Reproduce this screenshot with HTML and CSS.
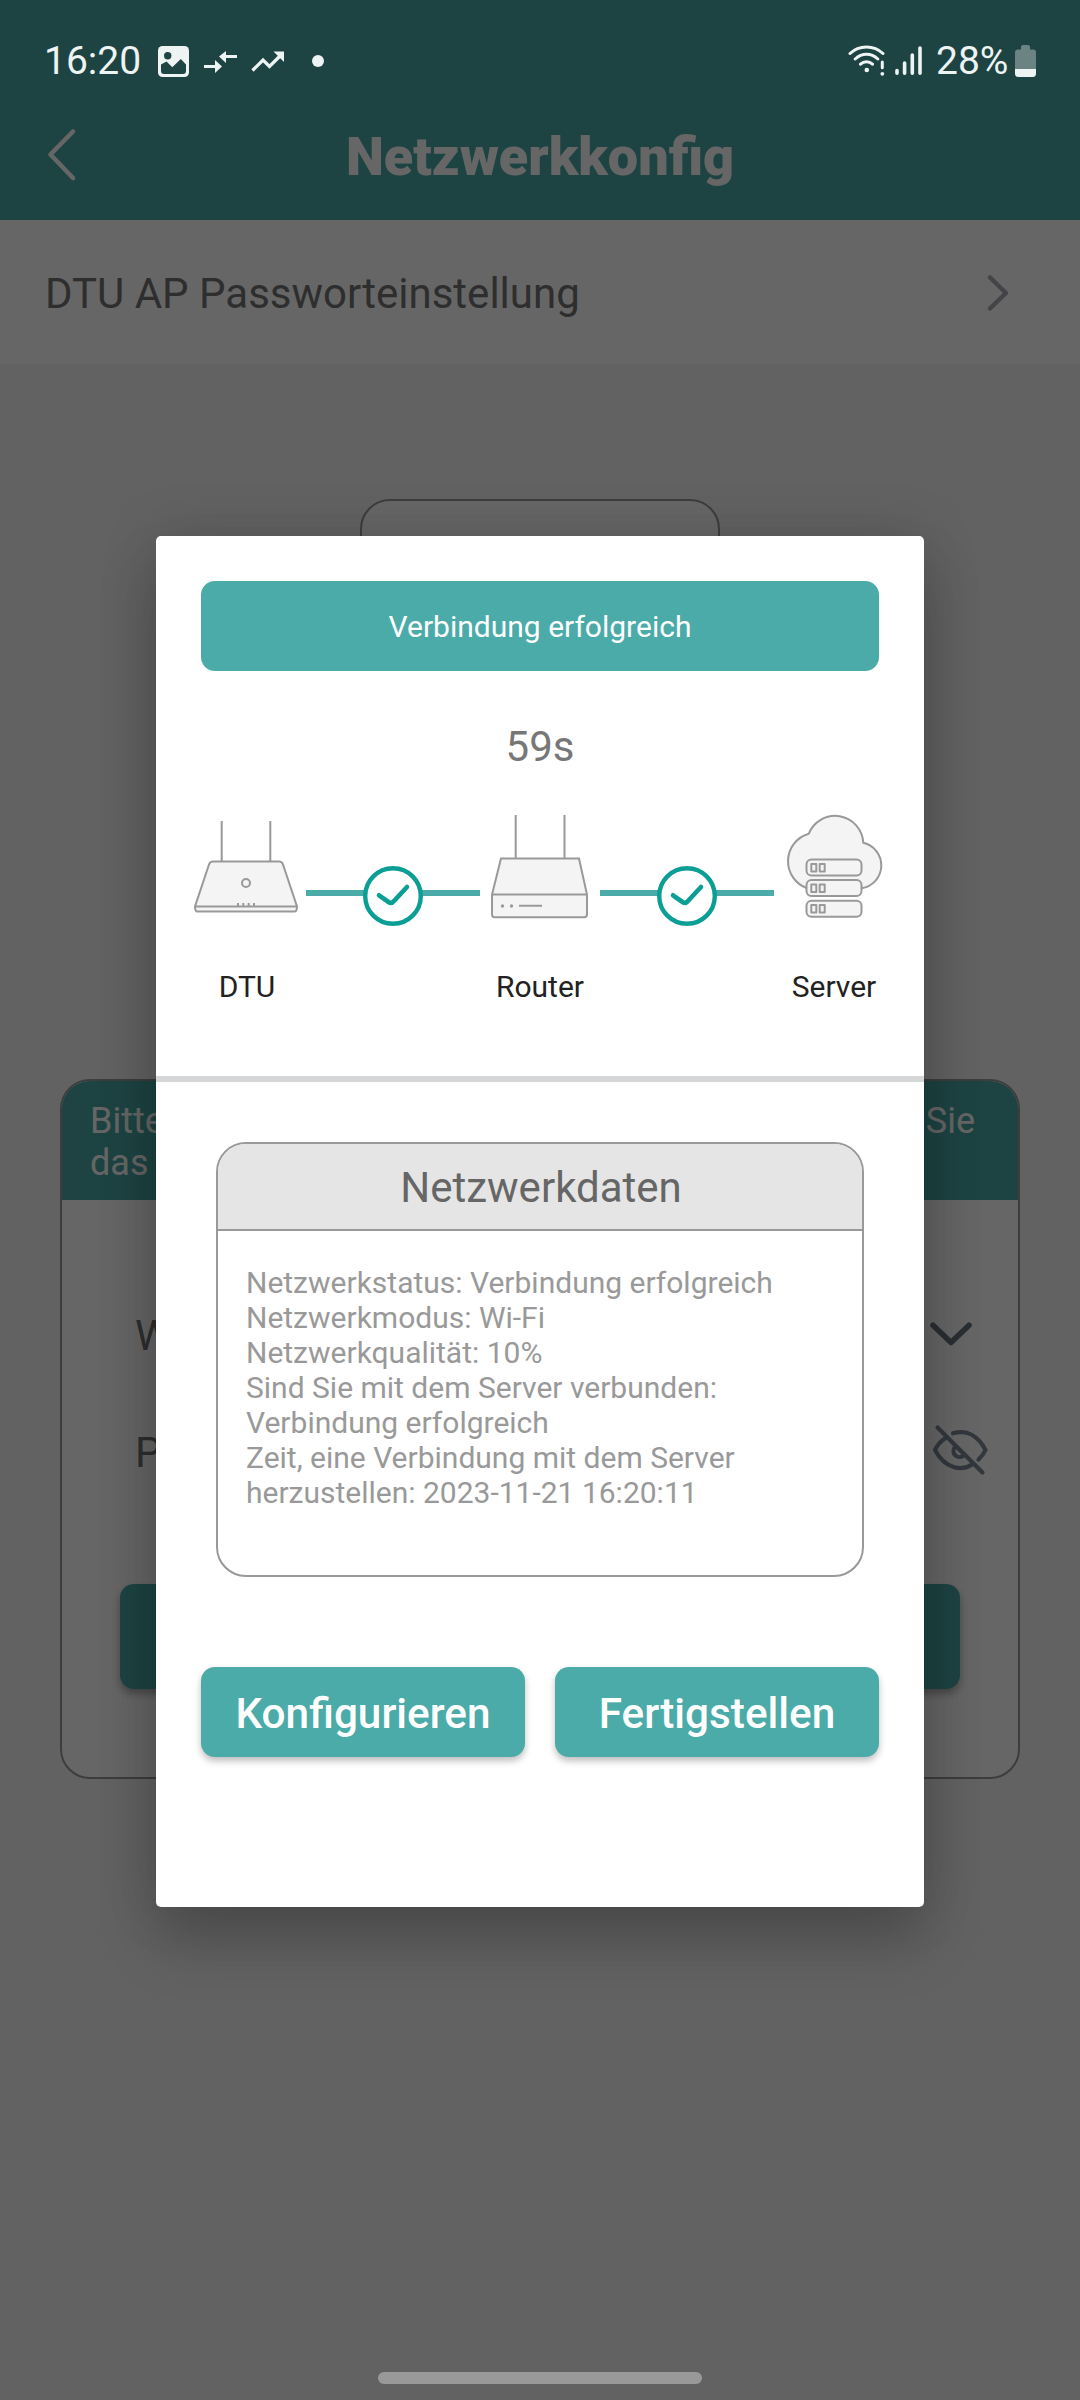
FILE: index.html
```html
<!DOCTYPE html>
<html lang="de">
<head>
<meta charset="utf-8">
<title>Netzwerkkonfig</title>
<link rel="stylesheet" href="styles.css">
</head>
<body>
<div class="screen">
  <header class="app-header">
    <svg class="back" width="40" height="60" viewBox="0 0 40 60"><path d="M33 6.500 10.500 29.500 33 53" fill="none" stroke="#fff" stroke-width="4.500" stroke-linecap="round" stroke-linejoin="round"/></svg>
    <h1 class="title">Netzwerkkonfig</h1>
  </header>
  <div class="setting-row">
    <span>DTU AP Passworteinstellung</span>
    <svg width="24" height="40" viewBox="0 0 24 40"><path d="M4 4.500 20 20 4 35.500" fill="none" stroke="#a8abb3" stroke-width="4.500" stroke-linecap="round" stroke-linejoin="round"/></svg>
  </div>
  <main class="content">
    <div class="device-box"></div>
    <section class="wifi-card">
      <div class="wifi-head"><div class="wifi-line"><span>Bitte</span><span>Sie</span></div><div class="wifi-line">das</div></div>
      <div class="wifi-row">
        <span>W</span>
        <svg class="chevron" width="46" height="28" viewBox="0 0 46 28"><path d="M5 3.200 23 20.500 41 3.200" fill="none" stroke="#6a7583" stroke-width="5.600" stroke-linecap="round" stroke-linejoin="round"/></svg>
      </div>
      <div class="wifi-row">
        <span>P</span>
        <svg class="eye" width="58" height="54" viewBox="0 0 58 54" fill="none" stroke="#7f8c9b" stroke-width="4.200" stroke-linecap="round" stroke-linejoin="round"><path d="M6.500 4.500 51.500 49.500M22 10.300C37 6 48 14.500 54.500 27Q52 32.500 47.500 36.500M14.500 15Q7.500 19.500 4 27C14 46 31 48.500 41 41.500M24 24a6 6 0 0 0 9 8M28 26.500 31 29"/></svg>
      </div>
      <div class="wifi-button"></div>
    </section>
  </main>
</div>
<div class="scrim">
  <div class="dialog">
    <div class="banner">Verbindung erfolgreich</div>
    <div class="timer">59s</div>
    <div class="chain">
      <div class="node">
        <svg width="120" height="120" viewBox="0 0 120 120" fill="#f4f4f4" stroke="#999" stroke-width="2">
          <path d="M35.700 15V55M84.300 15V55"/>
          <path d="M27 55.500H93Q96 55.500 97 58.500L111 100.500Q111 105.500 108.500 105.500H11.500Q9 105.500 9 100.500L23 58.500Q24 55.500 27 55.500ZM9.500 100.500H110.500"/>
          <circle cx="60" cy="77" r="4"/><path d="M52 97V101M57.300 97V101M62.700 97V101M68 97V101"/>
        </svg>
        <span class="dtu-label">DTU</span>
      </div>
      <div class="link"><svg width="60" height="60" viewBox="0 0 60 60"><circle cx="30" cy="30" r="27.800" fill="#fff" stroke="#0b9e95" stroke-width="4.400"/><path d="M16 29.300 25.500 36Q28.500 38 31 35L44 21" fill="none" stroke="#0b9e95" stroke-width="4.600" stroke-linecap="round"/></svg></div>
      <div class="node">
        <svg width="120" height="120" viewBox="0 0 120 120" fill="#f4f4f4" stroke="#999" stroke-width="2">
          <path d="M35.700 9V52M84.500 9V52"/>
          <path d="M21 52.500H99L107 88.500V108.500Q107 111.200 104.300 111.200H14.700Q12 111.200 12 108.500V88.500ZM12 88.500H107M39 99.700H62"/>
          <g fill="#999" stroke="none"><circle cx="22.500" cy="100" r="1.700"/><circle cx="31.500" cy="100" r="1.700"/></g>
        </svg>
        <span>Router</span>
      </div>
      <div class="link"><svg width="60" height="60" viewBox="0 0 60 60"><circle cx="30" cy="30" r="27.800" fill="#fff" stroke="#0b9e95" stroke-width="4.400"/><path d="M16 29.300 25.500 36Q28.500 38 31 35L44 21" fill="none" stroke="#0b9e95" stroke-width="4.600" stroke-linecap="round"/></svg></div>
      <div class="node">
        <svg width="120" height="120" viewBox="0 0 120 120" fill="#f4f4f4" stroke="#999" stroke-width="2">
          <path d="M33 82.200A28.600 28.600 0 0 1 34.700 27.800A28.300 28.300 0 0 1 89.300 36.800A23.100 23.100 0 0 1 87.500 82.200Z"/>
          <rect x="32.500" y="53.500" width="55" height="16" rx="5"/><rect x="32.500" y="74" width="55" height="16" rx="5"/><rect x="32.500" y="94.700" width="55" height="16" rx="5"/>
          <path d="M37.300 58h5v7.500h-5zM45.700 58h5v7.500h-5zM37.300 78.500h5v7.500h-5zM45.700 78.500h5v7.500h-5zM37.300 99h5v7.500h-5zM45.700 99h5v7.500h-5z" stroke-linejoin="round"/>
        </svg>
        <span>Server</span>
      </div>
    </div>
    <div class="divider"></div>
    <section class="data-card">
      <h2 class="data-title">Netzwerkdaten</h2>
      <div class="data-body">
        Netzwerkstatus: Verbindung erfolgreich<br>
        Netzwerkmodus: Wi-Fi<br>
        Netzwerkqualität: 10%<br>
        Sind Sie mit dem Server verbunden:<br>
        Verbindung erfolgreich<br>
        Zeit, eine Verbindung mit dem Server<br>
        herzustellen: 2023-11-21 16:20:11
      </div>
    </section>
    <div class="actions">
      <button class="action">Konfigurieren</button>
      <button class="action">Fertigstellen</button>
    </div>
  </div>
</div>
<div class="status-bar">
  <span class="clock">16:20</span>
  <svg class="i-photo" width="31" height="31" viewBox="0 0 31 31"><rect width="31" height="31" rx="4.500" fill="#eef3f3"/><circle cx="9.700" cy="9.700" r="3.700" fill="#1e4443"/><path d="M3 22.500V18.500L8.500 15.500 14.300 21.300 22.800 13 28 18.500V25Q28 28 25 28H6Q3 28 3 25Z" fill="#1e4443"/><path d="M0 18 2.500 20.500 8.500 15.500 14.300 21.300 22.800 13 28 18.500 31 21.500V18Z" fill="none"/></svg>
  <svg class="i-arrows" width="34" height="22" viewBox="0 0 34 22" fill="#eef3f3"><path d="M0 14H11V9L18 15.500 11 22V17H0ZM33 4H22V0L15 5.500 22 12V7H33Z"/></svg>
  <svg class="i-trend" width="34" height="22" viewBox="0 0 34 22"><path d="M1.500 19.500 12 9 18.500 15.500 29 5" fill="none" stroke="#eef3f3" stroke-width="3.300"/><path d="M22.500 0.500H33V11Z" fill="#eef3f3"/></svg>
  <span class="i-dot"></span>
  <svg class="i-wifi" width="38" height="34" viewBox="0 0 38 34" fill="none" stroke="#eef3f3" stroke-width="3" stroke-linecap="round"><path d="M2 10.500C11 1.700 26 1.700 35 10.500M7.200 16C14 9.800 23 9.800 29.800 16M12.500 21.200C16 17.800 21 17.800 24.500 21.200M34.300 19V24.800"/><g fill="#eef3f3" stroke="none"><circle cx="18.800" cy="27" r="2.300"/><circle cx="34.300" cy="30.800" r="1.900"/></g></svg>
  <svg class="i-signal" width="28" height="30" viewBox="0 0 28 30" stroke="#eef3f3" stroke-width="3.600" stroke-linecap="round"><path d="M2 24.500V27.200M9.600 17V27.200M17.300 9V27.200M25 2V27.200"/></svg>
  <span class="battery-text">28%</span>
  <svg class="i-battery" width="21" height="32" viewBox="0 0 21 32"><path d="M6 2Q6 0 8 0H13Q15 0 15 2V4.500H18Q21 4.500 21 7.500V24H0V7.500Q0 4.500 3 4.500H6Z" fill="#6b8483"/><path d="M0 24H21V28.500Q21 32 17.500 32H3.500Q0 32 0 28.500Z" fill="#eef3f3"/></svg>
</div>
<div class="home-indicator"></div>
</body>
</html>
```
FILE: styles.css
```css
* { box-sizing: border-box; }
body {
  position: relative;
  width: 1080px;
  height: 2400px;
  margin: 0;
  overflow: hidden;
  font-family: Roboto, "Liberation Sans", sans-serif;
  font-size: 30px;
  line-height: 35px;
}
svg { display: block; flex: none; }
.screen { height: 2400px; background: #f6f6f6; color: #737373; font-size: 42px; line-height: 49px; }

.app-header {
  display: grid;
  grid-template-columns: 80px 1fr 80px;
  align-items: center;
  height: 220px;
  padding: 90px 40px 0;
  background: #4aaba8;
  color: #fff;
}
.title { margin: 2px 0 0; font-size: 54px; line-height: 63px; font-weight: 900; text-align: center; }
.setting-row {
  display: flex;
  align-items: center;
  justify-content: space-between;
  height: 144px;
  padding: 2px 70px 0 45px;
  background: #fff;
}
.content { display: flex; flex-direction: column; align-items: center; padding-top: 135px; }
.device-box { width: 360px; height: 480px; border: 2px solid #999; border-radius: 30px; background: #fff; }
.wifi-card {
  display: flex;
  flex-direction: column;
  width: 960px;
  height: 700px;
  margin-top: 100px;
  border: 2px solid #999;
  border-radius: 30px;
  background: #fff;
  overflow: hidden;
}
.wifi-head {
  height: 119px;
  padding: 19px 43px 0 28px;
  background: #4aaba8;
  color: #fff;
  font-size: 36px;
  line-height: 42px;
}
.wifi-line { display: flex; justify-content: space-between; }
.wifi-row { display: flex; align-items: center; justify-content: space-between; height: 117px; padding: 0 29px 0 73px; }
.wifi-head + .wifi-row { margin-top: 77px; }
.chevron { margin-right: 15px; }
.eye { margin-bottom: 5px; }
.wifi-button {
  height: 105px;
  margin: 73px 58px 0;
  border-radius: 14px;
  background: #4aaba8;
  box-shadow: 0 5px 8px rgba(0, 0, 0, .3);
}

.scrim {
  position: absolute;
  inset: 0;
  display: flex;
  justify-content: center;
  align-items: flex-start;
  padding-top: 536px;
  background: rgba(0, 0, 0, .6);
}
.dialog {
  width: 768px;
  height: 1371px;
  padding: 45px 0 0;
  border-radius: 5px;
  background: #fff;
  box-shadow: 0 0 60px rgba(0, 0, 0, .14), 0 36px 60px rgba(0, 0, 0, .2);
}
.banner {
  display: flex;
  align-items: center;
  justify-content: center;
  height: 90px;
  margin: 0 45px;
  border-radius: 14px;
  background: #4aaba8;
  color: #fff;
}
.timer { margin-top: 51px; color: #777; font-size: 42px; line-height: 49px; text-align: center; }
.chain { display: flex; margin: 35px 30px 0; height: 198px; }
.node {
  display: flex;
  flex-direction: column;
  align-items: center;
  gap: 43px;
  width: 120px;
  color: #222;
}
.dtu-label { padding-left: 2px; }
.link {
  display: flex;
  justify-content: center;
  align-items: flex-start;
  width: 174px;
  padding-top: 60px;
  background: linear-gradient(#4aaba8, #4aaba8) 0 84px / 100% 6px no-repeat;
}
.divider { height: 6px; margin-top: 72px; background: #d5d6d8; }
.data-card {
  height: 435px;
  margin: 60px 60px 0;
  border: 2px solid #999;
  border-radius: 30px;
  overflow: hidden;
}
.data-title {
  margin: 0;
  height: 87px;
  padding-left: 2px;
  border-bottom: 2px solid #999;
  background: #e5e5e5;
  color: #666;
  font-size: 42px;
  font-weight: 400;
  line-height: 87px;
  text-align: center;
}
.data-body { padding: 34px 28px 0; color: #999; white-space: nowrap; }
.actions { display: flex; gap: 30px; margin: 90px 45px 0; }
.action {
  flex: 1;
  height: 90px;
  padding: 2px 0 0;
  border: 0;
  border-radius: 14px;
  background: #4aaba8;
  box-shadow: 0 4px 7px rgba(0, 0, 0, .26);
  color: #fff;
  font: 500 42.300px/49px Roboto, "Liberation Sans", sans-serif;
}

.status-bar {
  position: absolute;
  inset: 0 0 auto;
  display: flex;
  align-items: flex-start;
  height: 90px;
  padding: 0 44px 0 44px;
  color: #eef3f3;
  font-size: 39px;
  line-height: 46px;
}
.clock, .battery-text { margin-top: 38px; }
.clock { width: 114px; }
.i-photo { margin-top: 46px; }
.i-arrows { margin: 50.500px 0 0 15px; }
.i-trend { margin: 51px 0 0 13px; }
.i-dot { width: 12px; height: 12px; margin: 55px 0 0 27px; border-radius: 50%; background: #eef3f3; }
.i-wifi { margin: 43px 0 0 auto; }
.i-signal { margin: 46px 0 0 9px; }
.battery-text { width: 79px; margin-left: 13px; }
.i-battery { margin: 45px 0 0 0; }
.home-indicator {
  position: absolute;
  left: 378px;
  bottom: 16px;
  width: 324px;
  height: 12px;
  border-radius: 6px;
  background: #999;
}
```
